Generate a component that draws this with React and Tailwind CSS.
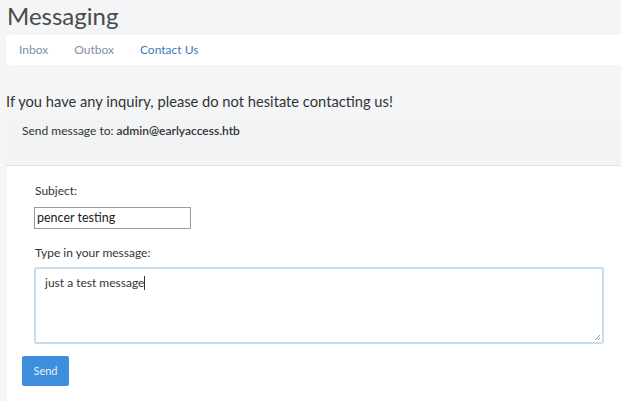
export default function App() {
  return (
    <div className="w-[621px] h-[401px] overflow-hidden bg-[#f4f5f7] text-[#333] relative" style={{ fontFamily: "Lato, 'Open Sans', sans-serif" }}>
      <div className="pl-[7px] pt-[1px] h-[35px] text-[24px] leading-[30px] text-[#4a4a4a]">Messaging</div>
      <div className="ml-[6px] h-[30px] bg-white rounded-l-[4px] flex items-center pl-[13px] text-[12px] gap-[26px]">
        <span className="text-[#7d8fa6]">Inbox</span>
        <span className="text-[#7d8fa6]">Outbox</span>
        <span className="text-[#3b7bc4]">Contact Us</span>
      </div>
      <div className="pl-[6px] pt-[26px] h-[53px] text-[14.7px] leading-[20px] text-[#333]">If you have any inquiry, please do not hesitate contacting us!</div>
      <div className="ml-[6px]">
        <div className="h-[48px] bg-[#f2f3f5] border-b border-[#dde3ea] pl-[16px] pt-[5px] text-[12px] leading-[16px] text-[#333]">
          Send message to: <span className="font-semibold">admin@earlyaccess.htb</span>
        </div>
        <div className="bg-white ml-[1px] h-[240px] pt-[17px]">
          <div className="pl-[28px] text-[12px] leading-[16px] text-[#333]">Subject:</div>
          <div className="pl-[27px] pt-[8px]">
            <div className="w-[157px] h-[22px] border border-[#9a9a9a] flex items-center px-[2px] text-[12.5px] text-[#222]">pencer testing</div>
          </div>
          <div className="pl-[28px] pt-[16px] text-[12px] leading-[16px] text-[#333]">Type in your message:</div>
          <div className="pl-[27px] pt-[6px]">
            <div className="w-[570px] h-[77px] border-2 border-[#c9dcec] rounded-[3px] relative pl-[9px] pt-[6px] text-[12px] leading-[16px] text-[#333]">
              just a test message<span className="inline-block w-[1px] h-[14px] bg-[#333] align-middle -mt-[2px]"></span>
              <svg className="absolute right-[1px] bottom-[1px]" width="7" height="7" viewBox="0 0 7 7">
                <path d="M6 1 L1 6 M6 4 L4 6" stroke="#999" strokeWidth="1" />
              </svg>
            </div>
          </div>
          <div className="pl-[15px] pt-[12px]">
            <div className="w-[47px] h-[30px] bg-[#3d8fdd] rounded-[2px] flex items-center justify-center text-[11px] text-[#e8f0fa]">Send</div>
          </div>
        </div>
      </div>
    </div>
  );
}
